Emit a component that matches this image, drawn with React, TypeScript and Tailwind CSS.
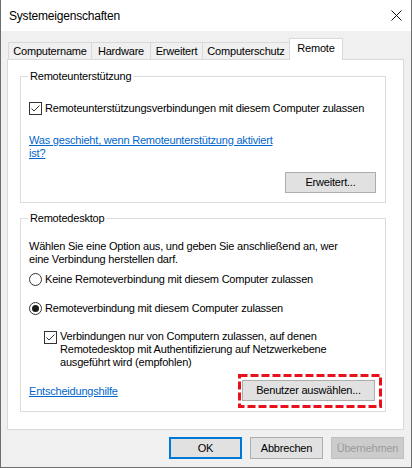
import type { ReactNode } from "react";

function CheckBox() {
  return (
    <span className="flex-none w-[13px] h-[13px] border border-[#333333] bg-white flex items-center justify-center">
      <svg width="11" height="11" viewBox="0 0 11 11">
        <path d="M1.5 5.5 L4 8 L9.5 2.5" fill="none" stroke="#333333" strokeWidth="1" />
      </svg>
    </span>
  );
}

function Radio({ checked }: { checked?: boolean }) {
  return (
    <span className="flex-none w-[13px] h-[13px] rounded-full border border-[#333333] bg-white flex items-center justify-center">
      {checked && <span className="w-[7px] h-[7px] rounded-full bg-[#1a1a1a]" />}
    </span>
  );
}

type Variant = "normal" | "default" | "disabled";

const variants: Record<Variant, string> = {
  normal: "border border-[#adadad] bg-[#e1e1e1] text-black",
  default: "border-2 border-[#0078d7] bg-[#e1e1e1] text-black",
  disabled: "border border-[#bfbfbf] bg-[#cccccc] text-[#9b9b9b]",
};

function Button({
  children,
  className = "",
  variant = "normal",
}: {
  children: ReactNode;
  className?: string;
  variant?: Variant;
}) {
  return <button className={`leading-none ${variants[variant]} ${className}`}>{children}</button>;
}

function Tab({ label, width, selected }: { label: string; width: string; selected?: boolean }) {
  return (
    <div
      className={`${width} -ml-px first:ml-0 border border-b-0 border-[#d9d9d9] flex items-center justify-center ${
        selected ? "h-[22px] -mb-px bg-white relative z-10 pb-[3px]" : "h-[17px] bg-[#f0f0f0]"
      }`}
    >
      {label}
    </div>
  );
}

export default function App() {
  return (
    <div className="w-[412px] h-[468px] flex flex-col bg-[#f0f0f0] border-x border-b border-[#6e6e6e] text-[11px] tracking-[-0.2px] text-black font-['Liberation_Sans',Arial,sans-serif]">
      {/* Title bar */}
      <div className="h-[31px] flex-none bg-white flex items-center justify-between pl-[8px] pr-[9px]">
        <span className="text-[12px]">Systemeigenschaften</span>
        <svg width="11" height="11" viewBox="0 0 11 11">
          <path d="M0.5 0.5 L10.5 10.5 M10.5 0.5 L0.5 10.5" stroke="#111" strokeWidth="1" />
        </svg>
      </div>

      {/* Tabs */}
      <div className="flex items-end h-[21px] mt-[7px] ml-[7px]">
        <Tab label="Computername" width="w-[84px]" />
        <Tab label="Hardware" width="w-[60px]" />
        <Tab label="Erweitert" width="w-[53px]" />
        <Tab label="Computerschutz" width="w-[88px]" />
        <Tab label="Remote" width="w-[54px]" selected />
      </div>

      {/* Tab panel */}
      <div className="ml-[6px] w-[397px] h-[371px] flex-none border border-[#d9d9d9] bg-white flex flex-col">
        <fieldset className="mt-[9px] ml-[12px] w-[366px] border border-[#dcdcdc] px-[8px] pr-[9px] pb-[9px]">
          <legend className="-ml-px px-[2px] leading-[14px]">Remoteunterstützung</legend>
          <div className="mt-[18px] flex items-center gap-[3px] leading-[14px]">
            <CheckBox />
            <span>Remoteunterstützungsverbindungen mit diesem Computer zulassen</span>
          </div>
          <a className="block mt-[19px] leading-[13px] text-[#0066cc] underline">
            Was geschieht, wenn Remoteunterstützung aktiviert
            <br />
            ist?
          </a>
          <div className="mt-[12px] flex justify-end">
            <Button className="w-[91px] h-[21px]">Erweitert...</Button>
          </div>
        </fieldset>

        <fieldset className="mt-[8px] ml-[12px] w-[366px] border border-[#dcdcdc] px-[8px] pr-[9px] pb-[10px]">
          <legend className="-ml-px px-[2px] leading-[14px]">Remotedesktop</legend>
          <p className="mt-[15px] leading-[13px]">
            Wählen Sie eine Option aus, und geben Sie anschließend an, wer
            <br />
            eine Verbindung herstellen darf.
          </p>
          <div className="mt-[6px] flex items-center gap-[3px] leading-[14px]">
            <Radio />
            <span>Keine Remoteverbindung mit diesem Computer zulassen</span>
          </div>
          <div className="mt-[15px] flex items-center gap-[3px] leading-[14px]">
            <Radio checked />
            <span>Remoteverbindung mit diesem Computer zulassen</span>
          </div>
          <div className="mt-[15px] pl-[15px] flex items-start gap-[3px] leading-[13px]">
            <span className="mt-[1px]">
              <CheckBox />
            </span>
            <span>
              Verbindungen nur von Computern zulassen, auf denen
              <br />
              Remotedesktop mit Authentifizierung auf Netzwerkebene
              <br />
              ausgeführt wird (empfohlen)
            </span>
          </div>
          <div className="mt-[11px] flex items-center justify-between">
            <a className="text-[#0066cc] underline leading-[14px]">Entscheidungshilfe</a>
            <div className="relative mr-[1px]">
              <Button className="w-[133px] h-[21px]">Benutzer auswählen...</Button>
              <svg
                className="absolute left-[-4px] top-[-6px] pointer-events-none"
                width="144"
                height="34"
                viewBox="0 0 144 34"
              >
                <rect
                  x="1.5"
                  y="1.5"
                  width="141"
                  height="31"
                  fill="none"
                  stroke="#e8101a"
                  strokeWidth="3"
                  strokeDasharray="8 3"
                />
              </svg>
            </div>
          </div>
        </fieldset>
      </div>

      {/* Dialog buttons */}
      <div className="mt-[7px] pr-[7px] flex justify-end gap-[8px]">
        <Button variant="default" className="w-[73px] h-[22px]">
          OK
        </Button>
        <Button className="w-[73px] h-[22px]">Abbrechen</Button>
        <Button variant="disabled" className="w-[73px] h-[22px]">
          Übernehmen
        </Button>
      </div>
    </div>
  );
}
